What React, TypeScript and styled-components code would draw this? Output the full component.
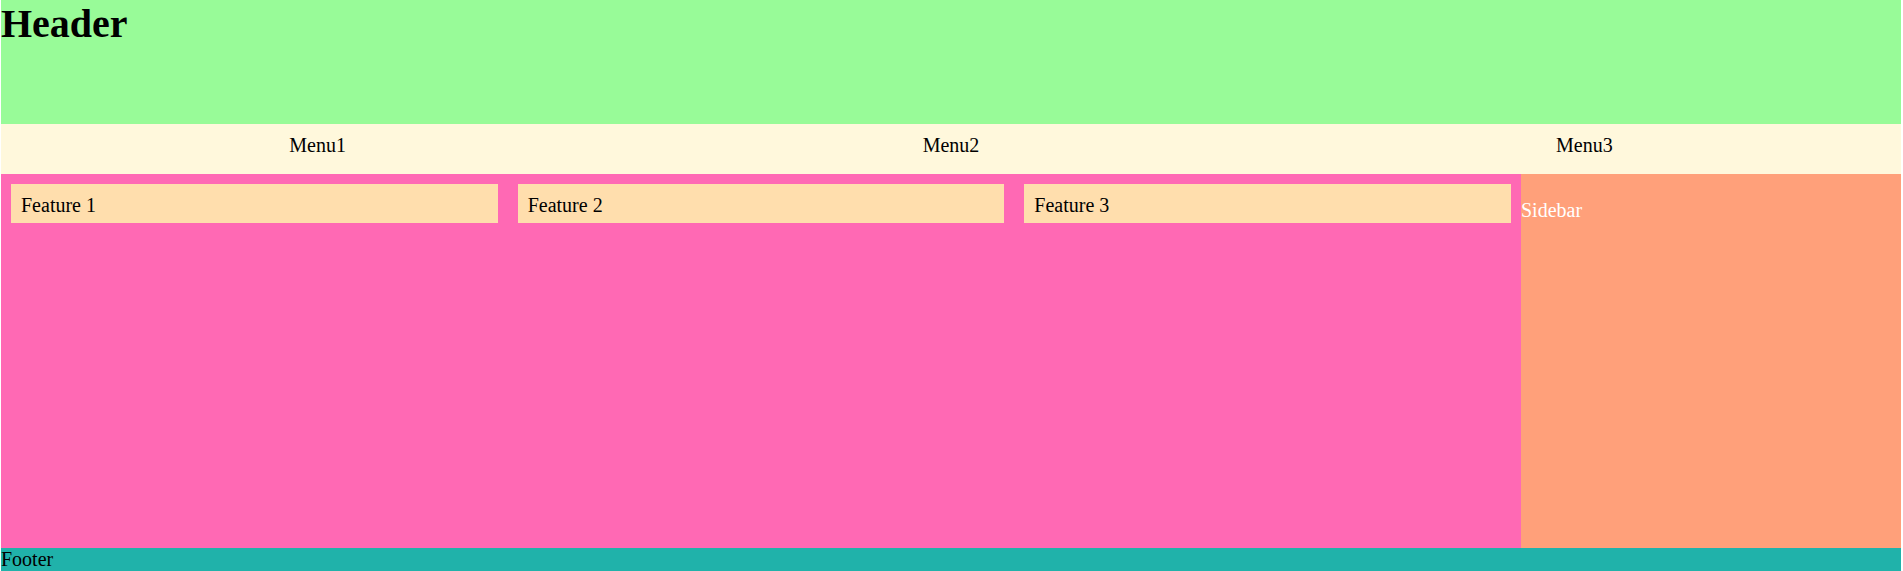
import React from "react";
import styled, { createGlobalStyle } from "styled-components";

const GlobalStyle = createGlobalStyle`
  html, body {
    margin: 0;
    padding: 0;
    background: #ffffff;
  }
  body {
    font-family: "Liberation Serif", "Times New Roman", serif;
    font-size: 20px;
    color: #000000;
  }
`;

const Page = styled.div`
  box-sizing: border-box;
  height: 571px;
  padding: 0 2px 0 1px;
  display: grid;
  grid-template-columns: 4fr 1fr;
  grid-template-rows: 124px 50px 1fr auto;
  grid-template-areas:
    "header header"
    "menu menu"
    "main sidebar"
    "footer footer";
`;

const Header = styled.header`
  grid-area: header;
  background: #98fb98;
`;

const Title = styled.h1`
  margin: 0;
  font-size: 40px;
  font-weight: bold;
`;

const Menu = styled.nav`
  grid-area: menu;
  background: #fff8dc;
  display: flex;
`;

const MenuItem = styled.div`
  flex: 1;
  text-align: center;
  padding: 10px;
`;

const Main = styled.main`
  grid-area: main;
  background: #ff69b4;
  padding: 10px;
  display: grid;
  grid-template-columns: repeat(3, 1fr);
  column-gap: 20px;
  align-content: start;
`;

const Feature = styled.div`
  box-sizing: border-box;
  height: 39px;
  background: #ffdead;
  padding: 10px 10px 0;
  line-height: 23px;
`;

const Sidebar = styled.aside`
  grid-area: sidebar;
  background: #ffa07a;
  color: #ffffff;
  padding-top: 25px;
`;

const Footer = styled.footer`
  grid-area: footer;
  background: #20b2aa;
`;

export default function App() {
  return (
    <>
      <GlobalStyle />
      <Page>
        <Header>
          <Title>Header</Title>
        </Header>
        <Menu>
          <MenuItem>Menu1</MenuItem>
          <MenuItem>Menu2</MenuItem>
          <MenuItem>Menu3</MenuItem>
        </Menu>
        <Main>
          <Feature>Feature 1</Feature>
          <Feature>Feature 2</Feature>
          <Feature>Feature 3</Feature>
        </Main>
        <Sidebar>Sidebar</Sidebar>
        <Footer>Footer</Footer>
      </Page>
    </>
  );
}
